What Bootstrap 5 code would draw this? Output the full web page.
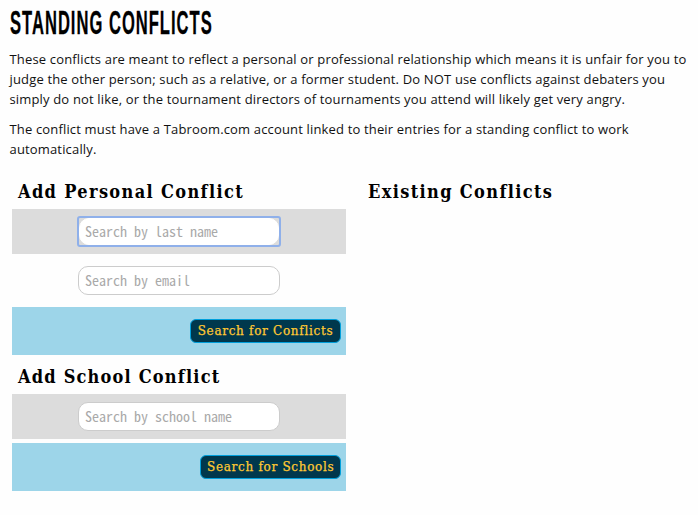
<!DOCTYPE html>
<html lang="en">
<head>
<meta charset="utf-8">
<meta name="viewport" content="width=device-width, initial-scale=1">
<title>Standing Conflicts</title>
<link rel="stylesheet" href="https://cdn.jsdelivr.net/npm/bootstrap@5.3.0/dist/css/bootstrap.min.css">
<style>
  body { background: #fefefe; color: #000; font-family: "Open Sans", sans-serif; font-size: 13px; line-height: 20px; overflow: hidden; }
  .page { padding: 3px 0 0 9.5px; }
  .page-title { font: bold 33px/40px "Liberation Sans Narrow", "Liberation Sans", sans-serif; height: 40px; margin: 0 0 6px; white-space: nowrap; }
  .page-title span { display: inline-block; letter-spacing: 2px; transform: scaleX(.502); transform-origin: 0 50%; -webkit-text-stroke: .3px #000; }
  .intro p { margin: 0 0 10px; letter-spacing: .16px; white-space: nowrap; color: #111; }
  .panels { gap: 16px; padding: 2px 0 0 2.5px; }
  .panel-col { width: 334px; }
  .section-title { font: bold 18px/24px "DejaVu Serif Condensed", "DejaVu Serif", serif; letter-spacing: 1.36px; margin: 0; padding: 9px 6px 5px; height: 38px; white-space: nowrap; }
  form + form .section-title { height: 39px; padding-top: 10px; letter-spacing: 1.2px; }
  .field-row { height: 45px; }
  .shade { background: #dcdcdc; }
  .search-box { width: 202px; height: 29px; border: 1px solid #ccc; border-radius: 10px; padding: 0 6px 2px; background: #fff; font: 14px "Noto Sans Mono CJK JP", "Liberation Mono", monospace; }
  .search-box::placeholder { color: #a9a9a9; opacity: 1; }
  .focus-frame { border: 2px solid #8fb0ea; border-radius: 3px; width: 204px; height: 31px; }
  .focus-frame .search-box { width: 200px; height: 27px; border-color: #fff; outline: 0; padding-left: 5px; }
  .action-row { height: 48px; background: #9dd5e9; padding-right: 5px; }
  .btn-search { height: 24px; background: #00384d; border: 1px solid #00a0dc; border-radius: 6px; color: #ffc832; font: 12px/20px "DejaVu Serif", serif; letter-spacing: .7px; padding: 0 6px; white-space: nowrap; -webkit-text-stroke: .25px #ffc832; }
  .w-conflicts { width: 151px; }
  .w-schools { width: 141px; }
</style>
<script src="https://cdn.jsdelivr.net/npm/bootstrap@5.3.0/dist/js/bootstrap.bundle.min.js"></script>
</head>
<body>
<main class="page">
  <h1 class="page-title"><span>STANDING CONFLICTS</span></h1>
  <div class="intro">
    <p>These conflicts are meant to reflect a personal or professional relationship which means it is unfair for you to<br>judge the other person; such as a relative, or a former student. Do NOT use conflicts against debaters you<br>simply do not like, or the tournament directors of tournaments you attend will likely get very angry.</p>
    <p>The conflict must have a Tabroom.com account linked to their entries for a standing conflict to work<br>automatically.</p>
  </div>
  <div class="panels d-flex align-items-start">
    <div class="panel-col">
      <form>
        <h2 class="section-title">Add Personal Conflict</h2>
        <div class="field-row shade d-flex align-items-center justify-content-center">
          <div class="focus-frame d-flex"><input class="search-box" type="text" placeholder="Search by last name"></div>
        </div>
        <div class="field-row d-flex align-items-center justify-content-center my-1">
          <input class="search-box" type="text" placeholder="Search by email">
        </div>
        <div class="action-row d-flex align-items-center justify-content-end">
          <button class="btn btn-search w-conflicts" type="button">Search for Conflicts</button>
        </div>
      </form>
      <form>
        <h2 class="section-title">Add School Conflict</h2>
        <div class="field-row shade d-flex align-items-center justify-content-center mb-1">
          <input class="search-box" type="text" placeholder="Search by school name">
        </div>
        <div class="action-row d-flex align-items-center justify-content-end">
          <button class="btn btn-search w-schools" type="button">Search for Schools</button>
        </div>
      </form>
    </div>
    <div class="panel-col">
      <h2 class="section-title">Existing Conflicts</h2>
    </div>
  </div>
</main>
</body>
</html>
